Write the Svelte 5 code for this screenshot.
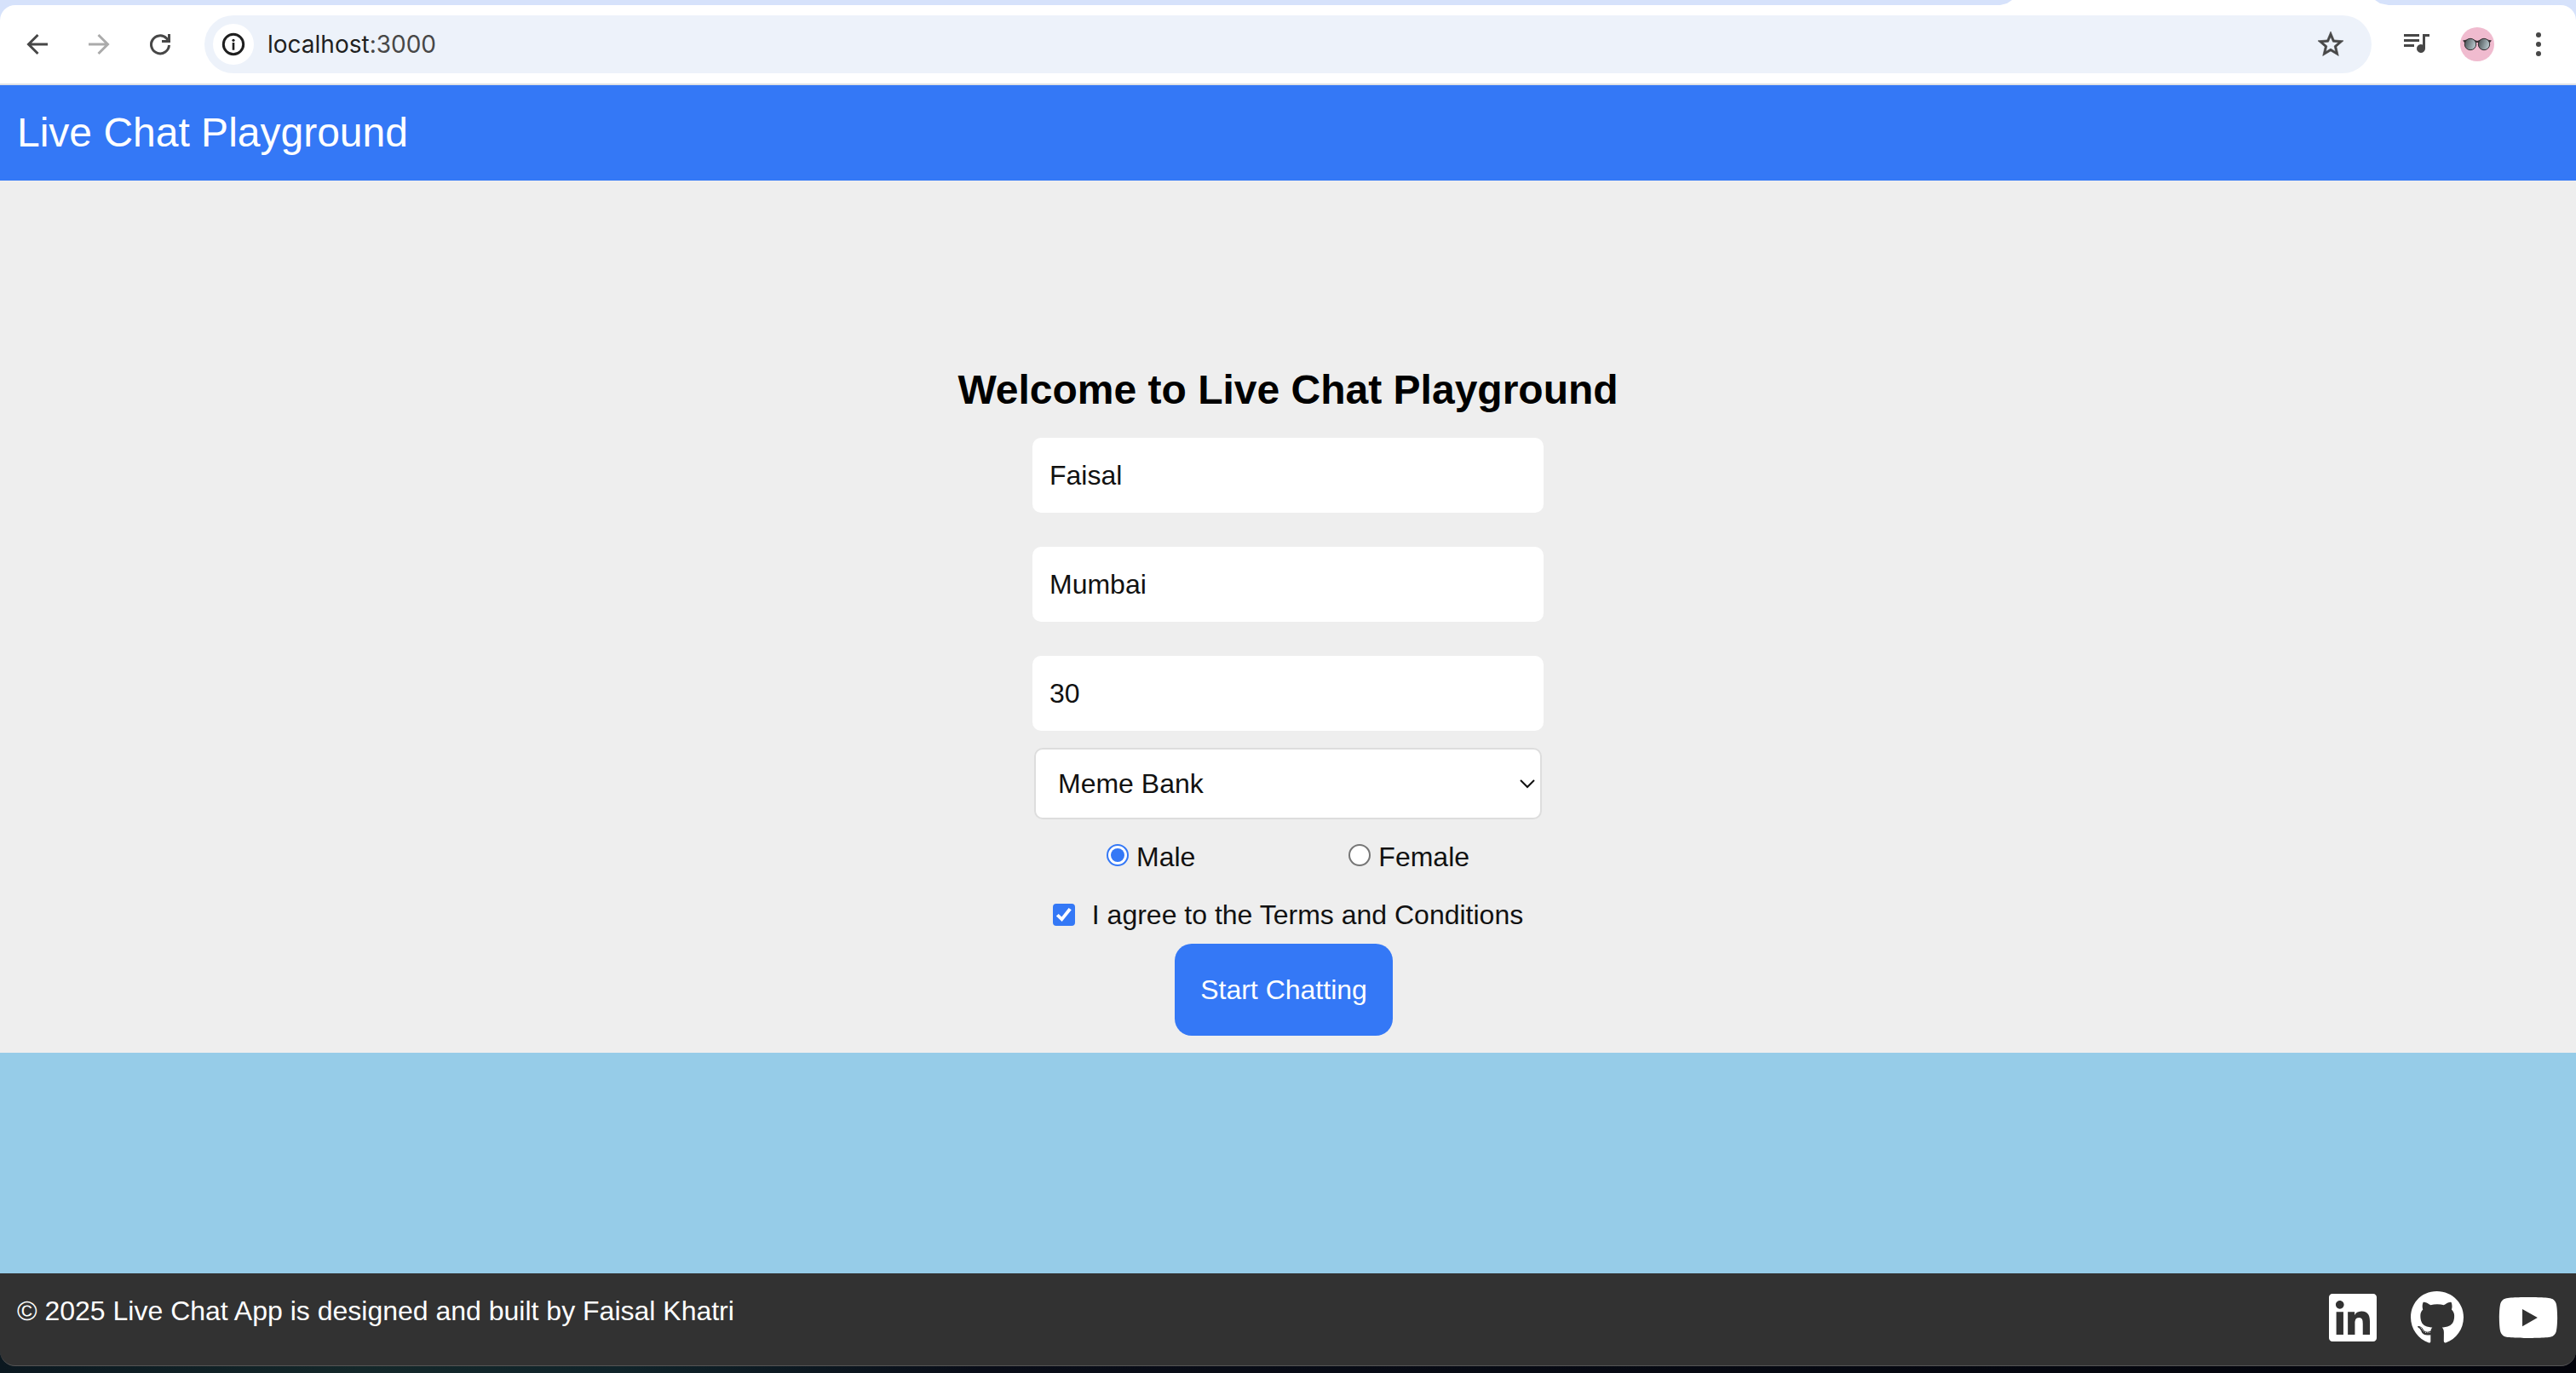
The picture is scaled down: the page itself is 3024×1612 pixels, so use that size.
<script>
  let name = $state('Faisal');
  let city = $state('Mumbai');
  let age = $state('30');
  let room = $state('Meme Bank');
  let gender = $state('male');
  let agreed = $state(true);
</script>

<div class="desktop">
  <div class="window">
    <div class="chrome">
      <div class="strip"><div class="tab"></div></div>
      <div class="toolbar">
        <button class="tool" aria-label="Back">
          <svg viewBox="0 0 36 36"><path class="line" d="M30 18H8M18.500 7L7.500 18L18.500 29" /></svg>
        </button>
        <button class="tool muted" aria-label="Forward">
          <svg viewBox="0 0 36 36"><path class="line" d="M6 18H28M17.500 7L28.500 18L17.500 29" /></svg>
        </button>
        <button class="tool" aria-label="Reload">
          <svg viewBox="0 0 36 36"><path class="line" d="M28.500 19A10.500 10.500 0 1 1 25.500 11L28 14M28.500 6V14.500H20" /></svg>
        </button>
        <div class="omnibox">
          <button class="info" aria-label="View site information">
            <svg viewBox="0 0 32 32"><circle class="line" cx="16" cy="16" r="11.700" /><path d="M14.700 14h2.600v8.700h-2.600z" /><circle cx="16" cy="11.300" r="1.600" /></svg>
          </button>
          <div class="url">localhost<span>:3000</span></div>
          <button class="star" aria-label="Bookmark this tab">
            <svg viewBox="0 0 24 24"><path stroke="currentColor" stroke-width="0.400" d="M22 9.240l-7.190-.620L12 2 9.190 8.630 2 9.240l5.460 4.730L5.820 21 12 17.270 18.180 21l-1.630-7.030L22 9.240zM12 15.400l-3.760 2.270 1-4.280-3.320-2.880 4.380-.380L12 6.100l1.710 4.040 4.380.380-3.320 2.880 1 4.280L12 15.400z" /></svg>
          </button>
        </div>
        <div class="actions">
          <button class="tool" aria-label="Media controls">
            <svg viewBox="0 0 36 36"><path d="M4 6h18v3H4zM4 12h18v3H4zM4 18h12v3H4zM26 6h8v3h-5v14a5 5 0 1 1-3-4.600z" /></svg>
          </button>
          <button class="avatar" aria-label="Profile">
            <svg viewBox="0 0 40 40">
              <defs><linearGradient id="lens" x2="1" y2="0.300"><stop offset="0" stop-color="#444b4e" /><stop offset="1" stop-color="#b3c3c8" /></linearGradient></defs>
              <circle cx="20" cy="20" r="20" fill="#f0bbcf" />
              <path d="M3 15.500L8 14.500H16L20 16L24 14.500H32L37 15.500L35 18H5Z" fill="#3b3336" />
              <circle cx="12" cy="20" r="6.700" fill="url(#lens)" stroke="#332d30" />
              <circle cx="28" cy="20" r="6.700" fill="url(#lens)" stroke="#332d30" />
            </svg>
          </button>
          <button class="tool" aria-label="Menu">
            <svg viewBox="0 0 36 36"><circle cx="18" cy="7" r="3" /><circle cx="18" cy="18" r="3" /><circle cx="18" cy="29" r="3" /></svg>
          </button>
        </div>
      </div>
    </div>

    <header>Live Chat Playground</header>

    <main>
      <form onsubmit={(e) => e.preventDefault()}>
        <h1>Welcome to Live Chat Playground</h1>
        <div class="fields">
          <input class="field" type="text" aria-label="Name" bind:value={name} />
          <input class="field" type="text" aria-label="City" bind:value={city} />
          <input class="field" type="text" aria-label="Age" bind:value={age} />
        </div>
        <div class="picker">
          <select aria-label="Room" bind:value={room}>
            <option>Meme Bank</option>
          </select>
          <svg viewBox="0 0 20 12"><path d="M2 2L10 10L18 2" /></svg>
        </div>
        <div class="genders">
          <label><input type="radio" name="gender" value="male" bind:group={gender} />Male</label>
          <label><input type="radio" name="gender" value="female" bind:group={gender} />Female</label>
        </div>
        <label class="terms"><input type="checkbox" bind:checked={agreed} />I agree to the Terms and Conditions</label>
        <button class="start">Start Chatting</button>
      </form>
    </main>

    <div class="sky"></div>

    <footer>
      <p>© 2025 Live Chat App is designed and built by Faisal Khatri</p>
      <nav>
        <a href="#linkedin" aria-label="LinkedIn">
          <svg viewBox="0 0 448 512"><path d="M416 32H31.900C14.300 32 0 46.500 0 64.300v383.400C0 465.500 14.300 480 31.900 480H416c17.600 0 32-14.500 32-32.300V64.300c0-17.800-14.400-32.300-32-32.300zM135.400 416H69V202.200h66.500V416zm-33.200-243c-21.300 0-38.500-17.300-38.500-38.500S80.900 96 102.200 96c21.200 0 38.500 17.300 38.500 38.500 0 21.300-17.200 38.500-38.500 38.500zm282.100 243h-66.400V312c0-24.800-.5-56.700-34.500-56.700-34.600 0-39.900 27-39.900 54.900V416h-66.400V202.200h63.700v29.200h.9c8.900-16.800 30.600-34.500 62.900-34.500 67.200 0 79.700 44.300 79.700 101.900V416z" /></svg>
        </a>
        <a href="#github" aria-label="GitHub">
          <svg viewBox="0 0 496 512"><path d="M165.900 397.400c0 2-2.300 3.600-5.200 3.600-3.300.3-5.600-1.300-5.600-3.600 0-2 2.300-3.600 5.200-3.600 3-.3 5.600 1.300 5.600 3.600zm-31.100-4.500c-.7 2 1.300 4.300 4.300 4.900 2.600 1 5.600 0 6.200-2s-1.300-4.300-4.300-5.200c-2.600-.7-5.500.3-6.200 2.300zm44.200-1.700c-2.900.7-4.900 2.600-4.600 4.900.3 2 2.900 3.300 5.900 2.600 2.900-.7 4.900-2.600 4.600-4.600-.3-1.900-3-3.200-5.900-2.900zM244.800 8C106.100 8 0 113.300 0 252c0 110.900 69.800 205.800 169.500 239.200 12.800 2.300 17.300-5.600 17.300-12.100 0-6.200-.3-40.400-.3-61.400 0 0-70 15-84.700-29.800 0 0-11.400-29.100-27.800-36.600 0 0-22.900-15.700 1.600-15.400 0 0 24.900 2 38.600 25.800 21.900 38.600 58.600 27.500 72.900 20.900 2.300-16 8.800-27.100 16-33.700-55.900-6.200-112.300-14.300-112.300-110.500 0-27.500 7.600-41.300 23.600-58.900-2.600-6.500-11.100-33.300 2.600-67.900 20.900-6.500 69 27 69 27 20-5.600 41.500-8.500 62.800-8.500s42.800 2.900 62.800 8.500c0 0 48.100-33.600 69-27 13.700 34.700 5.200 61.400 2.600 67.900 16 17.700 25.800 31.500 25.800 58.900 0 96.500-58.900 104.200-114.800 110.500 9.200 7.900 17 22.900 17 46.400 0 33.700-.3 75.400-.3 83.600 0 6.500 4.600 14.400 17.300 12.100C428.200 457.800 496 362.900 496 252 496 113.300 383.500 8 244.800 8zM97.200 352.900c-1.300 1-1 3.300.7 5.200 1.600 1.600 3.900 2.300 5.200 1 1.300-1 1-3.300-.7-5.200-1.600-1.600-3.900-2.300-5.200-1zm-10.800-8.100c-.7 1.300.3 2.900 2.300 3.900 1.600 1 3.600.7 4.300-.7.7-1.300-.3-2.900-2.300-3.900-2-.6-3.600-.3-4.300.7zm32.400 35.600c-1.600 1.300-1 4.300 1.300 6.200 2.300 2.300 5.200 2.600 6.500 1 1.300-1.300.7-4.300-1.300-6.200-2.200-2.300-5.200-2.600-6.500-1zm-11.400-14.700c-1.600 1-1.600 3.600 0 5.900 1.600 2.300 4.300 3.300 5.600 2.300 1.600-1.300 1.600-3.900 0-6.200-1.400-2.300-4-3.300-5.600-2z" /></svg>
        </a>
        <a href="#youtube" aria-label="YouTube">
          <svg viewBox="0 0 576 512"><path d="M549.655 124.083c-6.281-23.650-24.787-42.276-48.284-48.597C458.781 64 288 64 288 64S117.220 64 74.629 75.486c-23.497 6.322-42.003 24.947-48.284 48.597-11.412 42.867-11.412 132.305-11.412 132.305s0 89.438 11.412 132.305c6.281 23.650 24.787 41.500 48.284 47.821C117.220 448 288 448 288 448s170.780 0 213.371-11.486c23.497-6.321 42.003-24.171 48.284-47.821 11.412-42.867 11.412-132.305 11.412-132.305s0-89.438-11.412-132.305zm-317.510 213.508V175.185l142.739 81.205-142.739 81.201z" /></svg>
        </a>
      </nav>
    </footer>
  </div>
</div>

<style>
  * {
    box-sizing: border-box;
  }

  .desktop {
    display: flex;
    min-height: 100vh;
    padding-bottom: 8px;
    background: linear-gradient(90deg, #0b1820, #14282a 14%, #10242a 24%, #090d18 38%, #03040b);
    color: #111;
    font-family: 'Liberation Sans', Arial, sans-serif;
    font-size: 32px;
    line-height: 36px;
  }

  .window {
    display: flex;
    flex: 1;
    flex-direction: column;
  }

  button {
    padding: 0;
    border: 0;
    background: none;
    color: inherit;
    font: inherit;
  }

  svg {
    display: block;
    fill: currentColor;
  }

  .line {
    fill: none;
    stroke: currentColor;
    stroke-width: 3;
  }

  .chrome {
    background: #d6e2fb;
  }

  .strip {
    display: flex;
    justify-content: flex-end;
    height: 6px;
    padding-right: 220px;
  }

  .tab {
    width: 456px;
    background: #fff;
    clip-path: polygon(14px 0, 440px 0, 446px 4px, 456px 6px, 0 6px, 8px 4px);
  }

  .toolbar {
    display: flex;
    align-items: center;
    height: 94px;
    padding: 0 26px;
    border-bottom: 2px solid #dfe1e5;
    border-radius: 18px 18px 0 0;
    background: #fff;
    color: #474747;
  }

  .tool svg {
    width: 36px;
    height: 36px;
  }

  .tool + .tool {
    margin-left: 36px;
  }

  .muted {
    color: #ababab;
  }

  .omnibox {
    display: flex;
    flex: 1;
    align-items: center;
    height: 68px;
    margin: 0 34px;
    padding: 0 30px 0 10px;
    border-radius: 34px;
    background: #edf2fa;
  }

  .info {
    display: grid;
    place-items: center;
    width: 48px;
    height: 48px;
    border-radius: 50%;
    background: #fff;
    color: #1f1f1f;
  }

  .info svg {
    width: 32px;
    height: 32px;
  }

  .url {
    flex: 1;
    margin-left: 16px;
    color: #1f1f1f;
    font-family: Inter, sans-serif;
    font-size: 28px;
  }

  .url span {
    color: #474747;
  }

  .star svg {
    width: 36px;
    height: 36px;
  }

  .actions {
    display: flex;
    align-items: center;
    gap: 34px;
  }

  .avatar svg {
    width: 40px;
    height: 40px;
  }

  header {
    padding: 28px 20px;
    background: #3478f6;
    color: #fff;
    font-size: 48px;
    line-height: 56px;
  }

  main {
    padding: 218px 20px 20px;
    background: #eee;
  }

  form {
    display: flex;
    flex-direction: column;
    align-items: center;
  }

  h1 {
    margin: 0 0 28px;
    color: #000;
    font-size: 48px;
    line-height: 56px;
  }

  .fields {
    display: grid;
    gap: 40px;
    width: 100%;
    max-width: 600px;
  }

  .field {
    width: 100%;
    height: 88px;
    padding: 0 20px;
    border: 0;
    border-radius: 10px;
    background: #fff;
    color: inherit;
    font: inherit;
  }

  .picker {
    display: grid;
    align-items: center;
    width: 100%;
    max-width: 596px;
    margin-top: 20px;
  }

  .picker > * {
    grid-area: 1 / 1;
  }

  select {
    width: 100%;
    height: 84px;
    padding: 0 26px;
    border: 2px solid #ddd;
    border-radius: 10px;
    background: #fff;
    color: inherit;
    font: inherit;
    appearance: none;
  }

  .picker svg {
    justify-self: end;
    width: 20px;
    height: 12px;
    margin-right: 7px;
    fill: none;
    stroke: #111;
    stroke-width: 2;
    pointer-events: none;
  }

  label {
    display: flex;
    align-items: center;
  }

  .genders {
    display: flex;
    gap: 180px;
    margin-top: 26px;
  }

  .genders label {
    gap: 9px;
  }

  .genders input {
    margin: 0 0 4px;
  }

  input[type='radio'],
  input[type='checkbox'] {
    display: grid;
    place-items: center;
    width: 26px;
    height: 26px;
    appearance: none;
  }

  input[type='radio'] {
    border: 2px solid #767676;
    border-radius: 50%;
    background: #fff;
  }

  input[type='radio']:checked {
    border-color: #3478f6;
  }

  input[type='radio']:checked::after {
    width: 16px;
    height: 16px;
    border-radius: 50%;
    background: #3478f6;
    content: '';
  }

  .terms {
    gap: 20px;
    margin-top: 32px;
  }

  .terms input {
    margin: 0;
    border: 2px solid #767676;
    border-radius: 4px;
    background: #fff;
  }

  .terms input:checked {
    border-color: #3478f6;
    background: #3478f6;
  }

  .terms input:checked::after {
    width: 18px;
    height: 16px;
    background: #fff;
    clip-path: polygon(0 60%, 16% 44%, 36% 66%, 82% 0, 100% 14%, 38% 100%);
    content: '';
  }

  .start {
    margin: 16px 10px 0 0;
    padding: 36px 30px;
    border-radius: 20px;
    background: #3478f6;
    color: #fff;
  }

  .sky {
    flex: 1;
    background: #96cce8;
  }

  footer {
    display: flex;
    justify-content: space-between;
    padding: 20px 20px 24px;
    border-bottom: 1px solid #555;
    border-radius: 0 0 18px 18px;
    background: #323232;
    color: #fff;
  }

  footer p {
    margin: 6px 0;
  }

  nav {
    display: flex;
    gap: 40px;
  }

  a {
    color: inherit;
  }

  nav svg {
    height: 64px;
  }
</style>
